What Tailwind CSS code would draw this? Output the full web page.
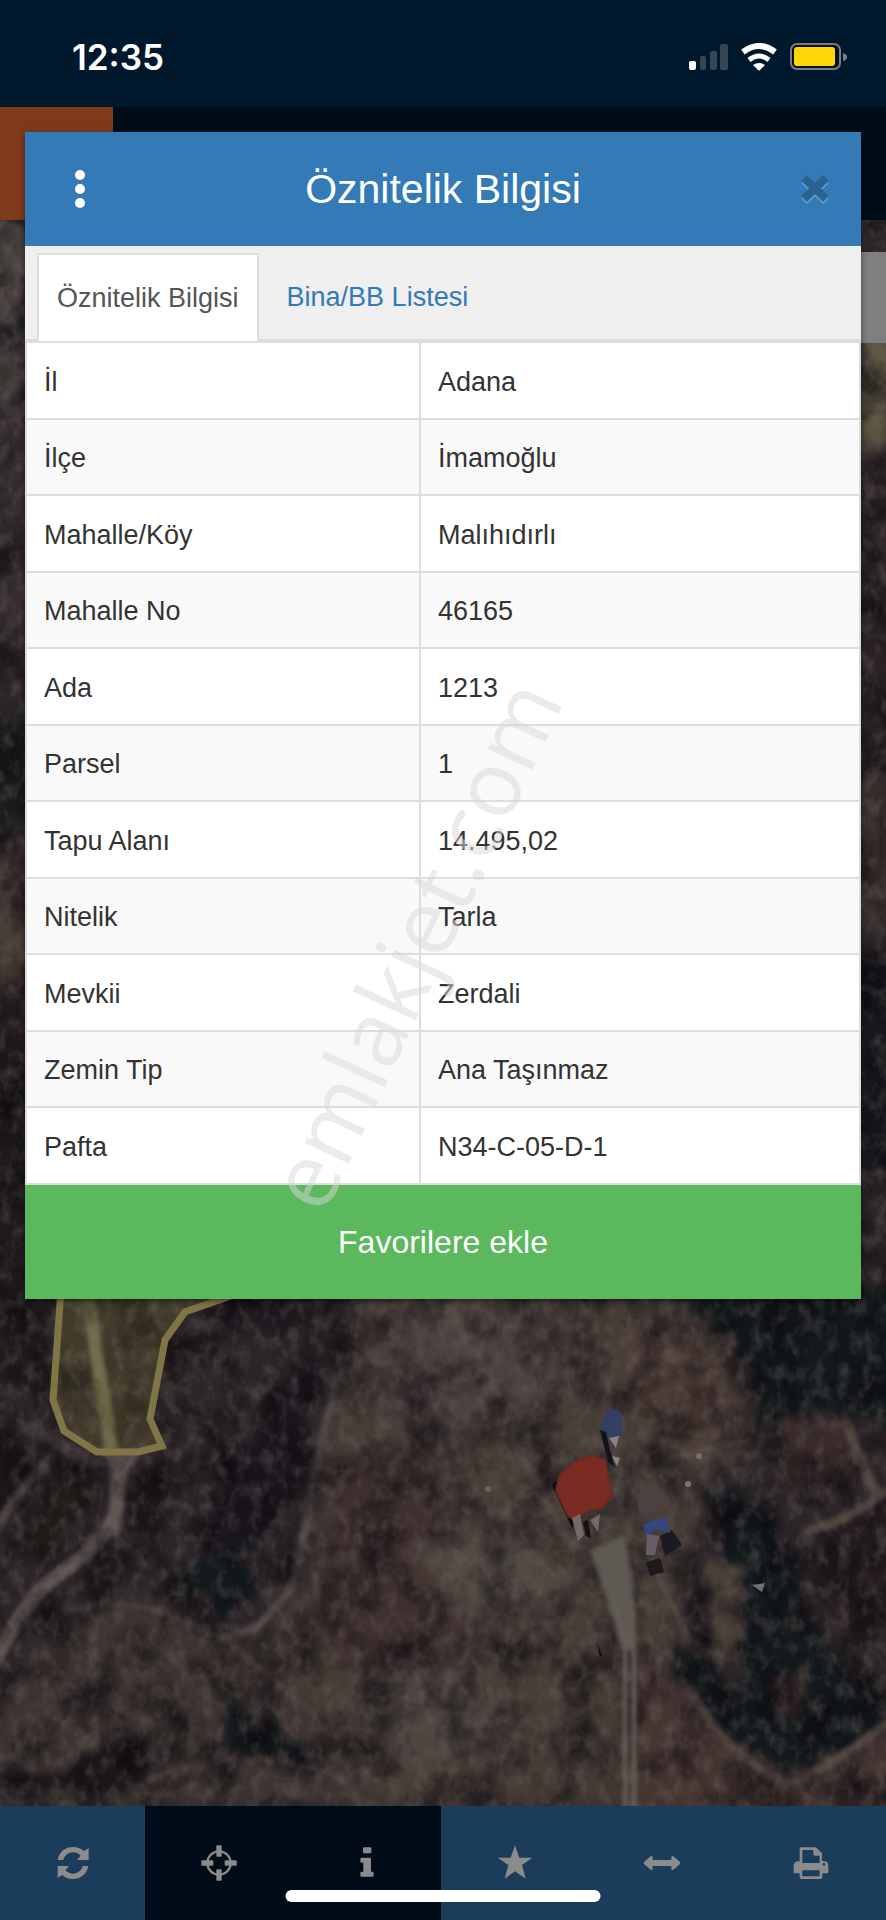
<!DOCTYPE html>
<html lang="tr">
<head>
  <meta charset="UTF-8">
  <meta name="viewport" content="width=device-width, initial-scale=1.0">
  <title>Parsel Sorgu | Öznitelik Bilgisi</title>
  <script src="https://cdn.jsdelivr.net/npm/@tailwindcss/browser@4"></script>
</head>
<body class="relative min-h-screen flex flex-col bg-[#00182b] font-['Liberation_Sans',Arial,sans-serif] text-[#333]">

  <!-- Status bar -->
  <div class="h-[107px] shrink-0 pl-[72px] pr-[38px] pt-[6px] flex items-center justify-between bg-[#00182b] text-white">
    <span class="font-['Inter',sans-serif] text-[35px] leading-10 font-semibold">12:35</span>
    <div class="flex items-center gap-3">
      <svg class="w-10 h-7" viewBox="0 0 40 28" aria-hidden="true">
        <rect x="1" y="18" width="7" height="9" rx="2" fill="#fff"/>
        <rect x="12" y="13" width="6" height="14" rx="2" fill="#334755"/>
        <rect x="22" y="8" width="7" height="19" rx="2" fill="#334755"/>
        <rect x="32" y="1" width="8" height="26" rx="2" fill="#334755"/>
      </svg>
      <svg class="w-[38px] h-7" viewBox="0 0 38 28" fill="none" aria-hidden="true">
        <path d="M3 9Q19-3 35 9" stroke="#fff" stroke-width="6"/>
        <path d="M9 17Q19 9 29 17" stroke="#fff" stroke-width="5"/>
        <path d="M13 22Q19 18 25 22L20 27Q19 28 18 27Z" fill="#fff"/>
      </svg>
      <svg class="w-[58px] h-7" viewBox="0 0 58 28" aria-hidden="true">
        <rect x="1" y="1" width="49" height="25" rx="6" fill="#0a0f14" stroke="#777c90" stroke-width="2"/>
        <rect x="4" y="4" width="41" height="19" rx="3" fill="#ffd60a"/>
        <path d="M53 10Q57 11 57 14T53 18Z" fill="#777c90"/>
      </svg>
    </div>
  </div>

  <!-- Navbar -->
  <header class="h-[113px] shrink-0 flex bg-[#000d18]">
    <a href="#" class="w-[113px] bg-[#7f3a1b]" aria-label="Ana sayfa"></a>
  </header>

  <!-- Map -->
  <main class="relative flex-1 overflow-hidden bg-[#2c2527]">
    <svg class="absolute inset-0 w-full h-full" viewBox="0 220 886 1586" preserveAspectRatio="xMidYMax slice" aria-hidden="true">
      <defs>
        <filter id="b1" x="-20%" y="-20%" width="140%" height="140%" color-interpolation-filters="sRGB"><feGaussianBlur stdDeviation="2"/></filter>
        <filter id="b4" x="-20%" y="-20%" width="140%" height="140%" color-interpolation-filters="sRGB"><feTurbulence type="fractalNoise" baseFrequency="0.05" numOctaves="3" seed="4" result="n"/><feDisplacementMap in="SourceGraphic" in2="n" scale="40" xChannelSelector="R" yChannelSelector="G"/><feGaussianBlur stdDeviation="4"/></filter>
        <filter id="b12" x="-20%" y="-20%" width="140%" height="140%" color-interpolation-filters="sRGB"><feGaussianBlur stdDeviation="12"/></filter>
        <filter id="dark" x="0" y="0" width="100%" height="100%" color-interpolation-filters="sRGB">
          <feTurbulence type="fractalNoise" baseFrequency="0.025 0.022" numOctaves="5" seed="7"/>
          <feColorMatrix values="0 0 0 0 0.04  0 0 0 0 0.03  0 0 0 0 0.05  1.6 0 0 0 -0.62"/>
        </filter>
        <filter id="light" x="0" y="0" width="100%" height="100%" color-interpolation-filters="sRGB">
          <feTurbulence type="fractalNoise" baseFrequency="0.08 0.06" numOctaves="3" seed="21"/>
          <feColorMatrix values="0 0 0 0 0.45  0 0 0 0 0.4  0 0 0 0 0.38  0 0.9 0 0 -0.4"/>
        </filter>
      </defs>
      <rect y="220" width="886" height="1586" fill="#2d2628"/>

      <!-- strips left and right of the dialog -->
      <g filter="url(#b12)">
        <path d="M-20 220H40V400H-20Z" fill="#4a4341"/>
        <path d="M-20 400H40V620H-20Z" fill="#362e30"/>
        <path d="M-20 720H40V820H-20Z" fill="#171c1b"/>
        <path d="M-20 850H40V985H-20Z" fill="#483e36"/>
        <path d="M-20 1000H40V1300H-20Z" fill="#201a1e"/>
        <path d="M850 330H900V445H850Z" fill="#635946"/>
        <path d="M850 460H900V760H850Z" fill="#2a2227"/>
        <path d="M850 780H900V930H850Z" fill="#3b302e"/>
        <path d="M850 950H900V1180H850Z" fill="#15171c"/>
      </g>

      <!-- fields -->
      <g filter="url(#b12)">
        <path d="M370 1285L620 1290L700 1315L750 1380L755 1450L700 1480L680 1640L710 1720L790 1806H300L250 1690L305 1560L330 1400Z" fill="#473d37"/>
        <path d="M390 1310L560 1320L540 1400L430 1440L360 1400Z" fill="#4d413f"/>
        <path d="M-20 1720L60 1620L130 1596L250 1640L330 1720L370 1806H-20Z" fill="#3e3532"/>
        <path d="M330 1460L420 1440L500 1600L460 1680L320 1660Z" fill="#3e302e"/>
        <path d="M620 1640L700 1700L790 1790L900 1720V1820H620Z" fill="#463632"/>
        <path d="M350 1690L470 1650L500 1720L420 1780Z" fill="#4f4641"/>
        <path d="M630 1310L710 1340L740 1420L680 1450L620 1390Z" fill="#4d3d37"/>
        <path d="M410 1545L520 1530L560 1600L470 1620Z" fill="#544b45"/>
      </g>

      <!-- trees -->
      <g filter="url(#b4)" fill="#12191c">
        <path d="M690 1290H900V1430L870 1420L840 1400L790 1420L762 1430L752 1380L735 1350Z"/>
        <path d="M705 1490L750 1500L800 1560L810 1620L860 1680L886 1690V1735L830 1745L790 1775L745 1750L705 1710L690 1680L740 1690L748 1600Z"/>
        <path d="M670 1650L715 1660L735 1700L770 1750L745 1740L700 1700L675 1680Z"/>
        <path d="M215 1545L255 1540L250 1600L225 1620L190 1590L160 1600L165 1585Z"/>
        <path d="M220 1700L290 1740L330 1775L300 1765L235 1750Z"/>
        <path d="M110 1740L145 1730L160 1770L130 1795L60 1790L-10 1796L-10 1778L60 1770Z" fill="#191519"/>
        <path d="M290 1370L325 1360L300 1480L270 1520L230 1560L200 1540L240 1460Z" fill="#1a151c"/>
        <path d="M130 1470L165 1475L175 1520L150 1545L128 1515Z" fill="#1c171b"/>
        <path d="M-20 1440L45 1450L40 1470L-10 1520Z" fill="#1e1819"/>
        <path d="M200 1300L340 1290L320 1320L230 1340Z" fill="#211a20"/>
        <path d="M0 1300L50 1300L45 1400L0 1380Z" fill="#1b181b"/>
        <path d="M60 1460L95 1480L100 1510L40 1560L20 1540Z" fill="#1e1b19"/>
      </g>
      <g filter="url(#b4)" fill="#3a2c2b">
        <path d="M790 1420L850 1425L870 1480L820 1500L775 1480Z"/>
        <path d="M830 1520L886 1500V1610L850 1640L815 1590Z" fill="#241c1f"/>
        <path d="M775 1680L810 1665L812 1700L780 1715Z"/>
        <path d="M700 1560L735 1570L738 1640L715 1650Z" fill="#4a4037"/>
      </g>

      <!-- paths and roads -->
      <g fill="none" stroke-linecap="round" stroke-linejoin="round" filter="url(#b1)">
        <path d="M-5 1660Q30 1590 65 1570Q115 1535 118 1500L114 1450" stroke="#625653" stroke-width="14"/>
        <path d="M112 1530L122 1465L132 1455" stroke="#625653" stroke-width="13"/>
        <path d="M112 1455L102 1390L86 1285" stroke="#6b6450" stroke-width="13"/>
        <path d="M-5 1530Q20 1490 50 1460" stroke="#4c4342" stroke-width="10"/>
        <path d="M-5 1420Q30 1425 60 1445L95 1462" stroke="#423a3b" stroke-width="12"/>
        <path d="M345 1350Q325 1420 312 1490Q300 1560 290 1590L260 1625L225 1640" stroke="#4f4645" stroke-width="8"/>
        <path d="M450 1310L500 1400L525 1460L560 1530L590 1560" stroke="#544b45" stroke-width="9"/>
        <path d="M70 1610Q150 1590 230 1645T350 1760" stroke="#4a403c" stroke-width="4"/>
        <path d="M150 1780Q220 1750 290 1763T360 1810" stroke="#4f4541" stroke-width="5"/>
        <path d="M690 1690Q730 1760 785 1785Q830 1770 890 1720" stroke="#51453f" stroke-width="9"/>
        <path d="M810 1530L840 1520L890 1490" stroke="#51453e" stroke-width="9"/>
        <path d="M848 1425L855 1450L875 1490" stroke="#51463f" stroke-width="10"/>
        <path d="M655 1460L750 1440M650 1560L670 1600L690 1640L720 1655" stroke="#574c44" stroke-width="5"/>
        <path d="M430 1800Q480 1740 520 1650" stroke="#4f4541" stroke-width="3"/>
      </g>
      <rect y="220" width="886" height="1586" filter="url(#dark)"/>
      <rect y="220" width="886" height="1586" filter="url(#light)"/>

      <!-- farm yard -->
      <g filter="url(#b1)">
        <path d="M590 1550L625 1535L633 1590L634 1650H622L612 1615Z" fill="#5f5953"/>
        <path d="M625 1640V1810M634 1640V1810" stroke="#6b635e" stroke-width="4" fill="none"/>
        <path d="M612 1600Q625 1630 625 1660M632 1600L634 1660" stroke="#645d57" stroke-width="5" fill="none"/>
      </g>
      <g stroke-linejoin="round">
        <path d="M552 1485L558 1480L575 1520L572 1528Z" fill="#100c0e"/>
        <path d="M560 1475L575 1462L590 1455L605 1460L612 1495L602 1508L588 1510L576 1520L568 1516L556 1490Z" fill="#7c2b22" stroke="#6a2a24" stroke-width="2"/>
        <path d="M572 1518L580 1514L584 1535L578 1541ZM590 1520L600 1514L598 1532Z" fill="#75686a"/>
        <path d="M583 1522L588 1520L591 1538L586 1536Z" fill="#151216"/>
        <path d="M600 1425L608 1408L621 1412L623 1435L603 1440Z" fill="#343f64"/>
        <path d="M600 1430L606 1432L610 1450L615 1468L608 1462Z" fill="#11131c"/>
        <path d="M609 1438L619 1436L616 1448ZM612 1456L620 1458L617 1466Z" fill="#8a8582"/>
        <path d="M636 1495L655 1483L672 1502L660 1512L640 1514Z" fill="#4b4240"/>
        <path d="M660 1536L672 1530L682 1545L665 1556Z" fill="#1b1922"/>
        <path d="M643 1524L654 1520L666 1517L670 1533L656 1530L646 1536Z" fill="#34477c"/>
        <path d="M647 1534L659 1536L655 1555H646Z" fill="#665f66"/>
        <path d="M646 1562L660 1558L664 1572L650 1576Z" fill="#1e191b"/>
        <circle cx="688" cy="1484" r="3" fill="#7a7674"/>
        <circle cx="699" cy="1456" r="3" fill="#7a6d66"/>
        <circle cx="488" cy="1489" r="3" fill="#6a625c"/>
        <path d="M597 1643L602 1655L600 1657Z" fill="#0d0a0b"/>
        <path d="M752 1585L765 1583L762 1592Z" fill="#737074"/>
      </g>

      <!-- parcel border -->
      <path d="M61 1290L53 1400L64 1431L97 1452L138 1452L162 1446L150 1419L165 1340L185 1312L236 1294V1280Z" fill="#a09a40" fill-opacity="0.18" stroke="#807545" stroke-width="7"/>
    </svg>
    <div class="absolute top-8 right-0 w-1/2 h-[91px] bg-[#7f7f7f]"></div>
  </main>

  <!-- Toolbar -->
  <footer class="relative h-[114px] shrink-0 flex bg-[#1b3d5b] text-[#8b8b8b]">
    <button class="w-[145px] flex items-center justify-center" aria-label="Yenile">
      <svg class="w-9 h-9" viewBox="0 0 108 108" fill="currentColor">
        <path d="M8 45C12 20 32 6 54 6C67 6 78 10 86 18L101 10V45H66L77 32C70 25 62 22 54 22C41 22 29 31 25 45Z"/>
        <path d="M100 63C96 88 76 102 54 102C41 102 30 98 22 90L8 98V63H42L31 76C38 83 46 86 54 86C67 86 79 77 83 63Z"/>
      </svg>
    </button>
    <button class="w-[148px] flex items-center justify-center bg-[#000d18]" aria-label="Konum">
      <svg class="w-9 h-9" viewBox="0 0 108 108" fill="currentColor">
        <circle cx="54" cy="54" r="35" fill="none" stroke="currentColor" stroke-width="7"/>
        <rect x="46" y="1" width="16" height="34" rx="3"/>
        <rect x="46" y="73" width="16" height="34" rx="3"/>
        <rect x="1" y="46" width="36" height="16" rx="3"/>
        <rect x="71" y="46" width="36" height="16" rx="3"/>
      </svg>
    </button>
    <button class="w-[148px] flex items-center justify-center bg-[#000d18]" aria-label="Bilgi">
      <svg class="w-9 h-9" viewBox="0 0 108 108" fill="currentColor">
        <rect x="42" y="7" width="25" height="18" rx="3"/>
        <path d="M38 38H62Q66 38 66 42V80H70Q74 80 74 84V91Q74 95 70 95H38Q34 95 34 91V84Q34 80 38 80H43V53H38Q34 53 34 49V42Q34 38 38 38Z"/>
      </svg>
    </button>
    <button class="w-[147px] flex items-center justify-center" aria-label="Favoriler">
      <svg class="w-9 h-9" viewBox="0 0 108 108" fill="currentColor">
        <path d="M54 1L67 38H106L75 60L86 101L54 79L23 101L34 60L2 38H41Z"/>
      </svg>
    </button>
    <button class="w-[148px] flex items-center justify-center" aria-label="Ölçüm">
      <svg class="w-9 h-9 overflow-visible" viewBox="0 0 108 108" fill="currentColor">
        <path d="M0 51L20 34Q26 31 26 38V45H82V38Q82 31 88 34L108 51Q110 54 108 57L88 74Q82 77 82 70V63H26V70Q26 77 20 74L0 57Q-2 54 0 51Z"/>
      </svg>
    </button>
    <button class="flex-1 flex items-center justify-center" aria-label="Yazdır">
      <svg class="w-9 h-9" viewBox="0 0 108 108" fill="currentColor" fill-rule="evenodd">
        <path d="M20 50V12Q20 7 25 7H69L87 25V48H92Q106 49 106 62V82Q106 85 103 85H88V97Q88 102 83 102H25Q20 102 20 97V85H5Q2 85 2 82V62Q2 51 15 48ZM28 15V54H80V32H66Q61 32 61 27V15ZM28 76V94H80V76ZM93 54A4 4 0 1 0 93 62A4 4 0 1 0 93 54Z"/>
      </svg>
    </button>
    <div class="absolute bottom-[18px] left-1/2 -translate-x-1/2 w-[315px] h-3 rounded-full bg-white"></div>
  </footer>

  <!-- Dialog -->
  <section role="dialog" aria-labelledby="dialogTitle" class="absolute top-[132px] inset-x-[25px] bg-white shadow-[0_2px_6px_rgba(0,0,0,0.5)]">
    <div class="h-[114px] px-6 flex items-center justify-between bg-[#337ab7] text-white">
      <button class="w-[62px] h-16 flex items-center justify-center" aria-label="Menü">
        <svg class="w-3 h-10" viewBox="0 0 12 40" fill="currentColor">
          <circle cx="6" cy="6" r="5"/>
          <circle cx="6" cy="20" r="5"/>
          <circle cx="6" cy="34" r="5"/>
        </svg>
      </button>
      <h1 id="dialogTitle" class="text-[41px] leading-[48px]">Öznitelik Bilgisi</h1>
      <button class="w-[62px] h-16 pr-[6px] flex items-center justify-end" aria-label="Kapat">
        <svg class="w-8 h-8" viewBox="0 0 32 32" fill="none" stroke-width="8">
          <path d="M5 7L27 28M27 7L5 28" stroke="#6a9fcd"/>
          <path d="M5 5L27 26M27 5L5 26" stroke="#296293"/>
        </svg>
      </button>
    </div>

    <nav class="pt-[7px] px-3 flex gap-2 bg-[#efefef] border-b-2 border-[#ddd] text-[27px] leading-9">
      <a href="#" class="-mb-[2px] h-[88px] px-[18px] flex items-center bg-white border-2 border-b-0 border-[#ddd] text-[#555]">Öznitelik Bilgisi</a>
      <a href="#" class="-mb-[2px] h-[88px] px-[18px] flex items-center border-2 border-transparent text-[#337ab7]">Bina/BB Listesi</a>
    </nav>

    <table class="w-full border-collapse text-[27px] leading-9 text-left">
      <tbody>
        <tr class="h-[77px]">
          <th class="w-[394px] px-[17px] pt-[2px] border-2 border-[#ddd] font-normal">İl</th>
          <td class="px-[17px] pt-[2px] border-2 border-[#ddd]">Adana</td>
        </tr>
        <tr class="h-[76px] bg-[#f9f9f9]">
          <th class="px-[17px] pt-[2px] border-2 border-[#ddd] font-normal">İlçe</th>
          <td class="px-[17px] pt-[2px] border-2 border-[#ddd]">İmamoğlu</td>
        </tr>
        <tr class="h-[77px]">
          <th class="px-[17px] pt-[2px] border-2 border-[#ddd] font-normal">Mahalle/Köy</th>
          <td class="px-[17px] pt-[2px] border-2 border-[#ddd]">Malıhıdırlı</td>
        </tr>
        <tr class="h-[76px] bg-[#f9f9f9]">
          <th class="px-[17px] pt-[2px] border-2 border-[#ddd] font-normal">Mahalle No</th>
          <td class="px-[17px] pt-[2px] border-2 border-[#ddd]">46165</td>
        </tr>
        <tr class="h-[77px]">
          <th class="px-[17px] pt-[2px] border-2 border-[#ddd] font-normal">Ada</th>
          <td class="px-[17px] pt-[2px] border-2 border-[#ddd]">1213</td>
        </tr>
        <tr class="h-[76px] bg-[#f9f9f9]">
          <th class="px-[17px] pt-[2px] border-2 border-[#ddd] font-normal">Parsel</th>
          <td class="px-[17px] pt-[2px] border-2 border-[#ddd]">1</td>
        </tr>
        <tr class="h-[77px]">
          <th class="px-[17px] pt-[2px] border-2 border-[#ddd] font-normal">Tapu Alanı</th>
          <td class="px-[17px] pt-[2px] border-2 border-[#ddd]">14.495,02</td>
        </tr>
        <tr class="h-[76px] bg-[#f9f9f9]">
          <th class="px-[17px] pt-[2px] border-2 border-[#ddd] font-normal">Nitelik</th>
          <td class="px-[17px] pt-[2px] border-2 border-[#ddd]">Tarla</td>
        </tr>
        <tr class="h-[77px]">
          <th class="px-[17px] pt-[2px] border-2 border-[#ddd] font-normal">Mevkii</th>
          <td class="px-[17px] pt-[2px] border-2 border-[#ddd]">Zerdali</td>
        </tr>
        <tr class="h-[76px] bg-[#f9f9f9]">
          <th class="px-[17px] pt-[2px] border-2 border-[#ddd] font-normal">Zemin Tip</th>
          <td class="px-[17px] pt-[2px] border-2 border-[#ddd]">Ana Taşınmaz</td>
        </tr>
        <tr class="h-[77px]">
          <th class="px-[17px] pt-[2px] border-2 border-[#ddd] font-normal">Pafta</th>
          <td class="px-[17px] pt-[2px] border-2 border-[#ddd]">N34-C-05-D-1</td>
        </tr>
      </tbody>
    </table>

    <button class="w-full h-[114px] bg-[#5cb85c] text-white text-[32px] leading-10">Favorilere ekle</button>
  </section>

  <!-- Watermark -->
  <span class="absolute left-[413px] top-[944px] -translate-x-1/2 -translate-y-1/2 -rotate-65 pointer-events-none font-['Open_Sans',sans-serif] text-[91px] leading-none text-[#d7d7d7]/50">emlakjet.com</span>
</body>
</html>
